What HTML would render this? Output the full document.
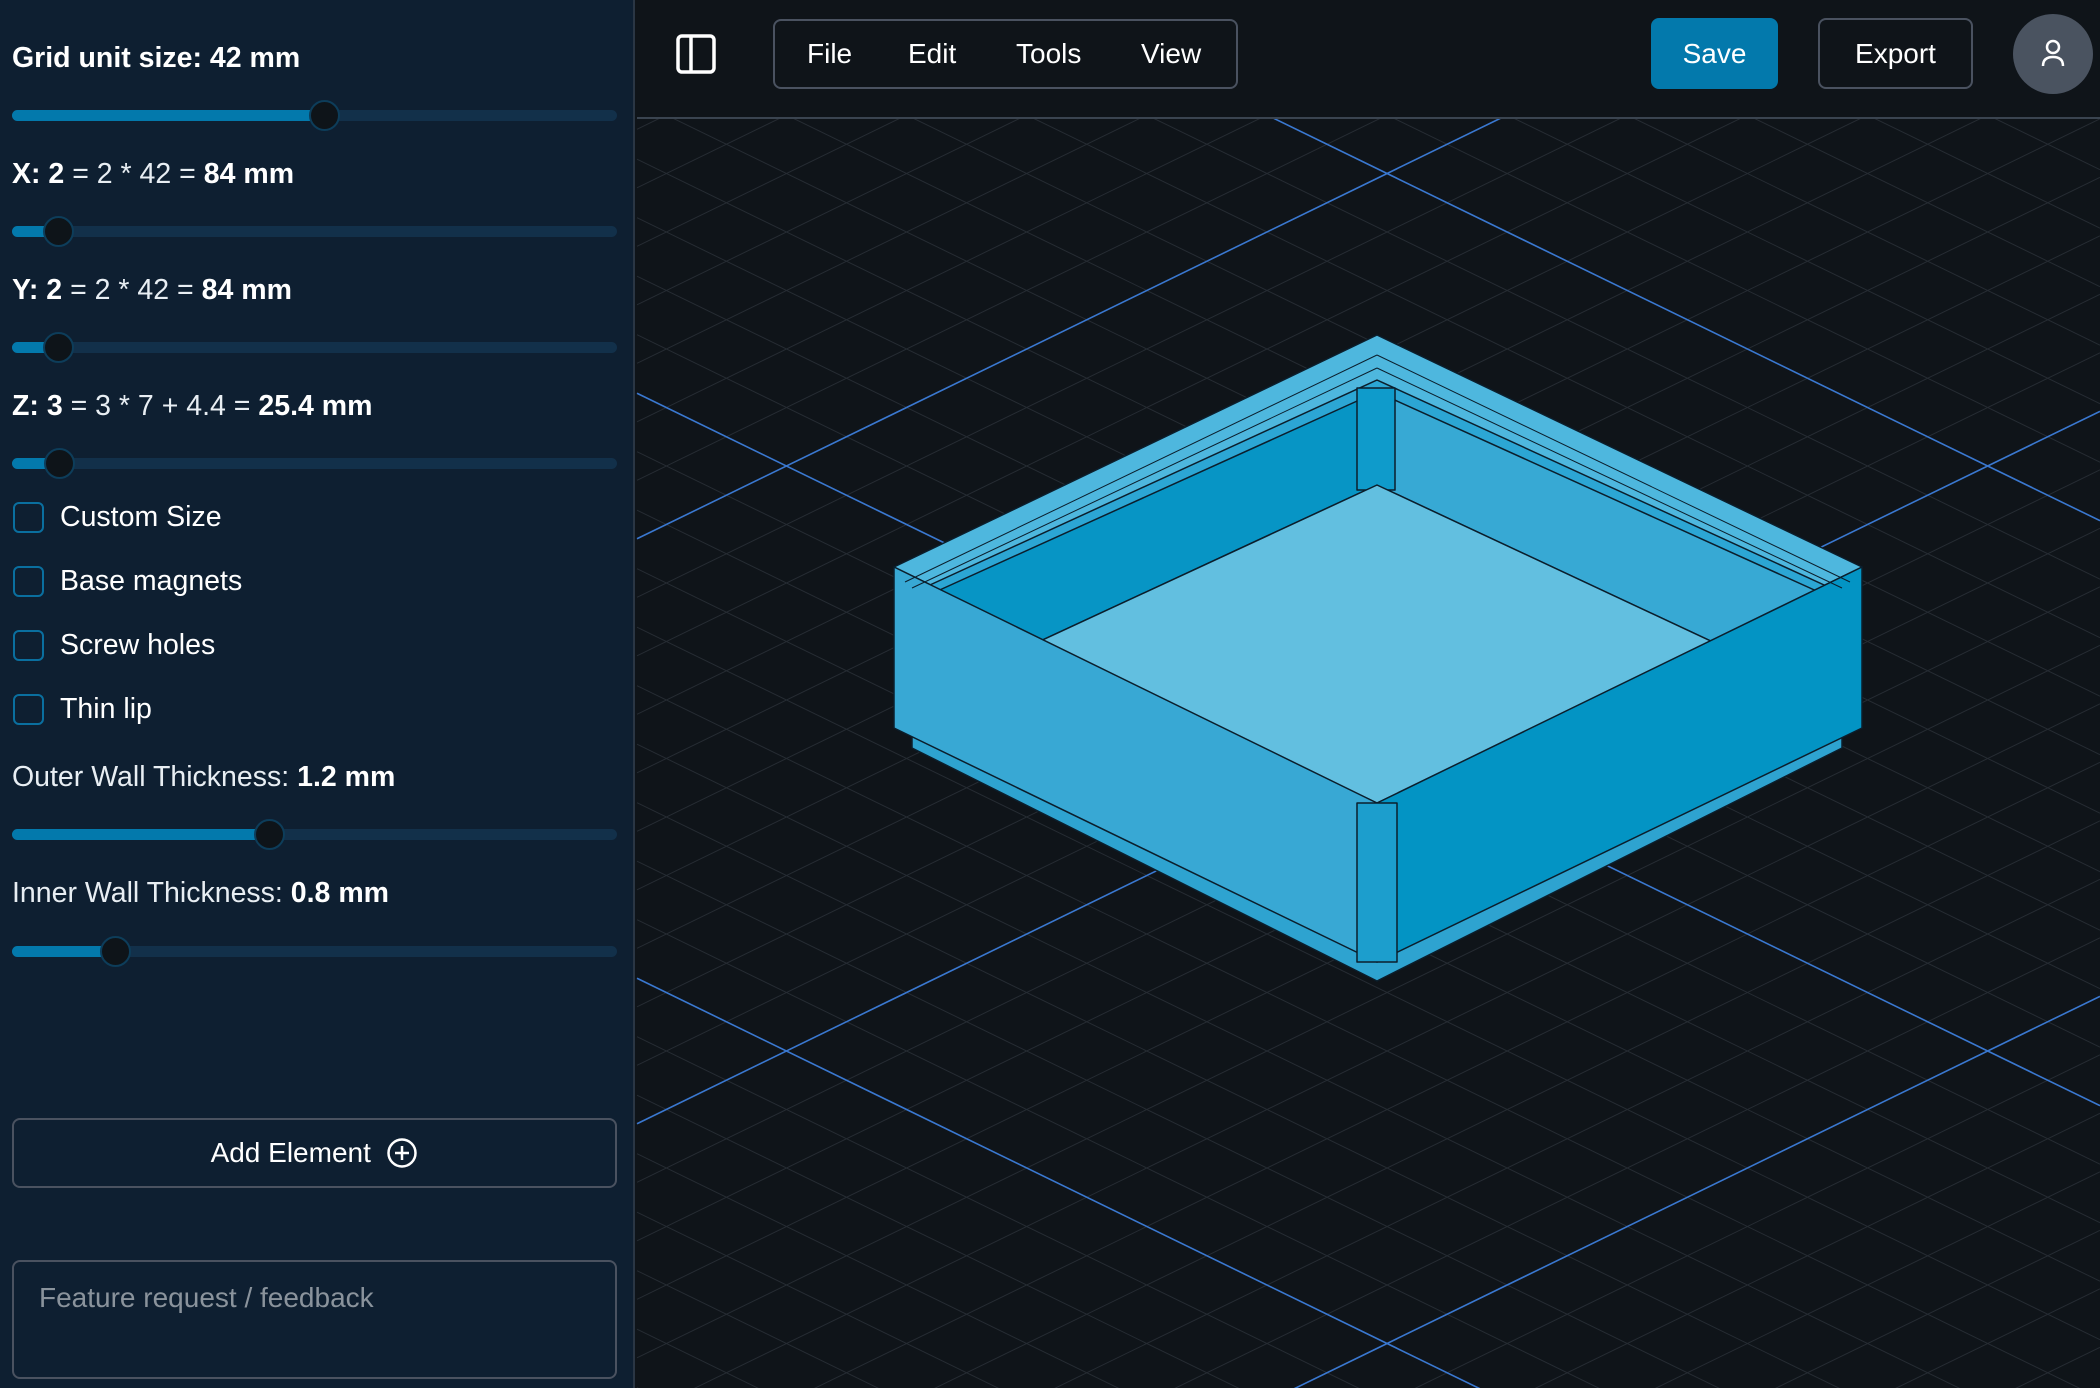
<!DOCTYPE html>
<html><head><meta charset="utf-8"><style>
*{box-sizing:border-box;margin:0;padding:0}
body{width:2100px;height:1388px;overflow:hidden;background:#0f1419;font-family:"Liberation Sans",sans-serif;color:#fff;position:relative}
#side{position:absolute;left:0;top:0;width:635px;height:1388px;background:#0e1f31;border-right:2px solid #2a3644;overflow:hidden}
.lbl{position:absolute;left:12px;font-size:28.5px;line-height:34px;white-space:nowrap}
.lbl b{font-weight:700}
.lt{font-weight:400;color:#e8eef3}
.trk{position:absolute;left:12px;width:605px;height:11px;border-radius:6px;background:#12304a}
.fill{position:absolute;left:0;top:0;height:11px;border-radius:6px;background:#0379ac}
.th{position:absolute;top:-10px;width:31px;height:31px;border-radius:50%;background:#0e1419;border:2px solid #0d3d5a;margin-left:-15px}
.cb{position:absolute;left:13px;width:31px;height:31px;border:2px solid #0a6f9f;border-radius:6px}
.cl{position:absolute;left:60px;font-size:28.5px;line-height:34px}
#hdr{position:absolute;left:637px;top:0;right:0;height:119px;border-bottom:2px solid #3a4450;background:#0f1419}
.btn{position:absolute;border:2px solid #4a5260;border-radius:8px;font-size:28px;display:flex;align-items:center;justify-content:center}
</style></head><body>
<svg id="vp" style="position:absolute;left:0;top:0" width="2100" height="1388"></svg>
<div id="hdr"></div>
<svg style="position:absolute;left:676px;top:34px" width="40" height="40" viewBox="0 0 40 40"><rect x="2" y="2" width="36" height="36" rx="4" fill="none" stroke="#fff" stroke-width="3.5"/><line x1="15" y1="2" x2="15" y2="38" stroke="#fff" stroke-width="3.5"/></svg>
<div class="btn" style="left:773px;top:19px;width:465px;height:70px;justify-content:flex-start">
<span style="position:absolute;left:32px">File</span><span style="position:absolute;left:133px">Edit</span><span style="position:absolute;left:241px">Tools</span><span style="position:absolute;left:366px">View</span></div>
<div class="btn" style="left:1651px;top:18px;width:127px;height:71px;background:#0379ac;border-color:#0379ac">Save</div>
<div class="btn" style="left:1818px;top:18px;width:155px;height:71px">Export</div>
<div style="position:absolute;left:2013px;top:14px;width:80px;height:80px;border-radius:50%;background:#4a5360"></div>
<svg style="position:absolute;left:2038px;top:38px" width="30" height="32" viewBox="0 0 30 32"><circle cx="15" cy="9" r="6" fill="none" stroke="#fff" stroke-width="2.5"/><path d="M5 28 Q5 19 15 19 Q25 19 25 28" fill="none" stroke="#fff" stroke-width="2.5"/></svg>

<div id="side">
<div class="lbl" style="top:41px"><b>Grid unit size: 42 mm</b></div>
<div class="trk" style="top:110px"><div class="fill" style="width:312px"></div><div class="th" style="left:312px"></div></div>
<div class="lbl" style="top:157px"><b>X: 2</b> <span class="lt">= 2 * 42 =</span> <b>84 mm</b></div>
<div class="trk" style="top:226px"><div class="fill" style="width:46px"></div><div class="th" style="left:46px"></div></div>
<div class="lbl" style="top:273px"><b>Y: 2</b> <span class="lt">= 2 * 42 =</span> <b>84 mm</b></div>
<div class="trk" style="top:342px"><div class="fill" style="width:46px"></div><div class="th" style="left:46px"></div></div>
<div class="lbl" style="top:389px"><b>Z: 3</b> <span class="lt">= 3 * 7 + 4.4 =</span> <b>25.4 mm</b></div>
<div class="trk" style="top:458px"><div class="fill" style="width:47px"></div><div class="th" style="left:47px"></div></div>
<div class="cb" style="top:502px"></div><div class="cl" style="top:500px">Custom Size</div>
<div class="cb" style="top:566px"></div><div class="cl" style="top:564px">Base magnets</div>
<div class="cb" style="top:630px"></div><div class="cl" style="top:628px">Screw holes</div>
<div class="cb" style="top:694px"></div><div class="cl" style="top:692px">Thin lip</div>
<div class="lbl" style="top:760px"><span class="lt">Outer Wall Thickness:</span> <b>1.2 mm</b></div>
<div class="trk" style="top:829px"><div class="fill" style="width:257px"></div><div class="th" style="left:257px"></div></div>
<div class="lbl" style="top:876px"><span class="lt">Inner Wall Thickness:</span> <b>0.8 mm</b></div>
<div class="trk" style="top:946px"><div class="fill" style="width:103px"></div><div class="th" style="left:103px"></div></div>
<div class="btn" style="left:12px;top:1118px;width:605px;height:70px">Add Element&nbsp;&nbsp;<svg width="32" height="32" viewBox="0 0 32 32"><circle cx="16" cy="16" r="13.5" fill="none" stroke="#fff" stroke-width="2.5"/><path d="M16 9v14M9 16h14" stroke="#fff" stroke-width="2.5"/></svg></div>
<div class="btn" style="left:12px;top:1260px;width:605px;height:119px;align-items:flex-start;justify-content:flex-start;padding:20px 25px;color:#8a939c">Feature request / feedback</div>
</div>
<script>
var s=document.getElementById('vp'),h='';
var m=0.487,x0=637,x1=2100;
function ln(sg,c,col,w){var ya=sg*m*x0+c,yb=sg*m*x1+c;h+='<line x1="'+x0+'" y1="'+ya+'" x2="'+x1+'" y2="'+yb+'" stroke="'+col+'" stroke-width="'+w+'"/>';}
for(var k=-60;k<60;k++){ln(1,83+k*58.5,'#262c33',1);ln(-1,849+k*58.5,'#262c33',1);}
for(var k=-3;k<4;k++){ln(1,83+k*585,'#3a78d0',1.6);ln(-1,849+k*585,'#3a78d0',1.6);}
var st='stroke="#0b1e2c" stroke-width="1.5" stroke-linejoin="round"';
function P(pts,f){h+='<polygon points="'+pts+'" fill="'+f+'" '+st+'/>';}
P('912,728 912,748 1377,981 1842,748 1842,728 1377,962','#2ea3d0');
P('1377,335 1862,567 1377,803 894,567','#4eb7de');
P('1377,380 1835,590 1377,800 919,590','#2ca6d4');
P('1377,392 1377,485 1036,643 922,598','#0795c5');
P('1377,392 1832,598 1715,643 1377,485','#37a9d4');
P('1357,388 1395,388 1395,490 1357,490','#0f9bcb');
P('1377,485 1715,643 1377,803 1036,643','#62bfe0');
P('894,567 1377,803 1377,962 894,728','#38a8d4');
P('1377,803 1862,567 1862,728 1377,962','#0394c4');
P('1357,803 1397,803 1397,962 1357,962','#1c9ecd');
h+='<path d="M1377,355 L905,582 M1377,368 L912,588 M1377,355 L1850,582 M1377,368 L1842,588" fill="none" stroke="#0b1e2c" stroke-width="1"/>';
s.innerHTML=h;
</script>
</body></html>
